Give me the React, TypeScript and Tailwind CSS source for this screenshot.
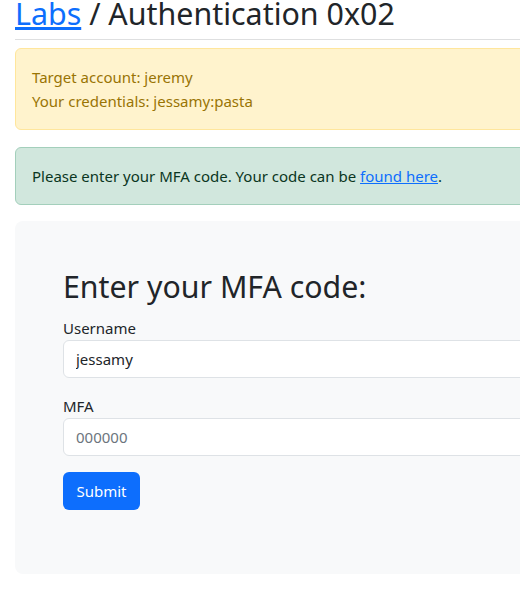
import React from "react";

export default function App() {
  return (
    <div
      className="w-[520px] h-[610px] overflow-hidden bg-white text-[#212529]"
      style={{ fontFamily: '"Noto Sans", sans-serif' }}
    >
      <div className="w-[600px] pl-[15px]">
        <h1 className="-mt-[4px] text-[30.4px] leading-[36px] font-normal">
          <a href="#" className="text-[#0d6efd] underline">Labs</a> / Authentication 0x02
        </h1>
        <hr className="mt-[7px] mb-[8px] border-t border-[#dedfe0]" />
        <div className="mb-[17px] rounded-md border border-[#ffe69c] bg-[#fff3cd] p-4 text-[15px] leading-6 text-[#997404]">
          <div>Target account: jeremy</div>
          <div>Your credentials: jessamy:pasta</div>
        </div>
        <div className="mb-[16px] rounded-md border border-[#a3cfbb] bg-[#d1e7dd] p-4 text-[15px] leading-6 text-[#0a3622]">
          Please enter your MFA code. Your code can be{" "}
          <a href="#" className="text-[#0d6efd] underline">found here</a>.
        </div>
        <div className="rounded-lg bg-[#f8f9fa] px-12 pt-12 pb-16">
          <h2 className="mb-[11px] text-[30.3px] leading-[36px] font-normal">Enter your MFA code:</h2>
          <label className="mb-0 block text-[15px] leading-6">Username</label>
          <input
            className="mb-4 block h-[38px] w-full rounded-md border border-[#dee2e6] bg-white px-3 text-[15px] text-[#212529] outline-none"
            defaultValue="jessamy"
          />
          <label className="block text-[15px] leading-6">MFA</label>
          <input
            className="mb-4 block h-[38px] w-full rounded-md border border-[#dee2e6] bg-white px-3 text-[15px] text-[#212529] outline-none placeholder:text-[#6c757d]"
            placeholder="000000"
          />
          <button className="h-[38px] w-[77px] rounded-md bg-[#0d6efd] text-[15px] text-white">Submit</button>
        </div>
      </div>
    </div>
  );
}
